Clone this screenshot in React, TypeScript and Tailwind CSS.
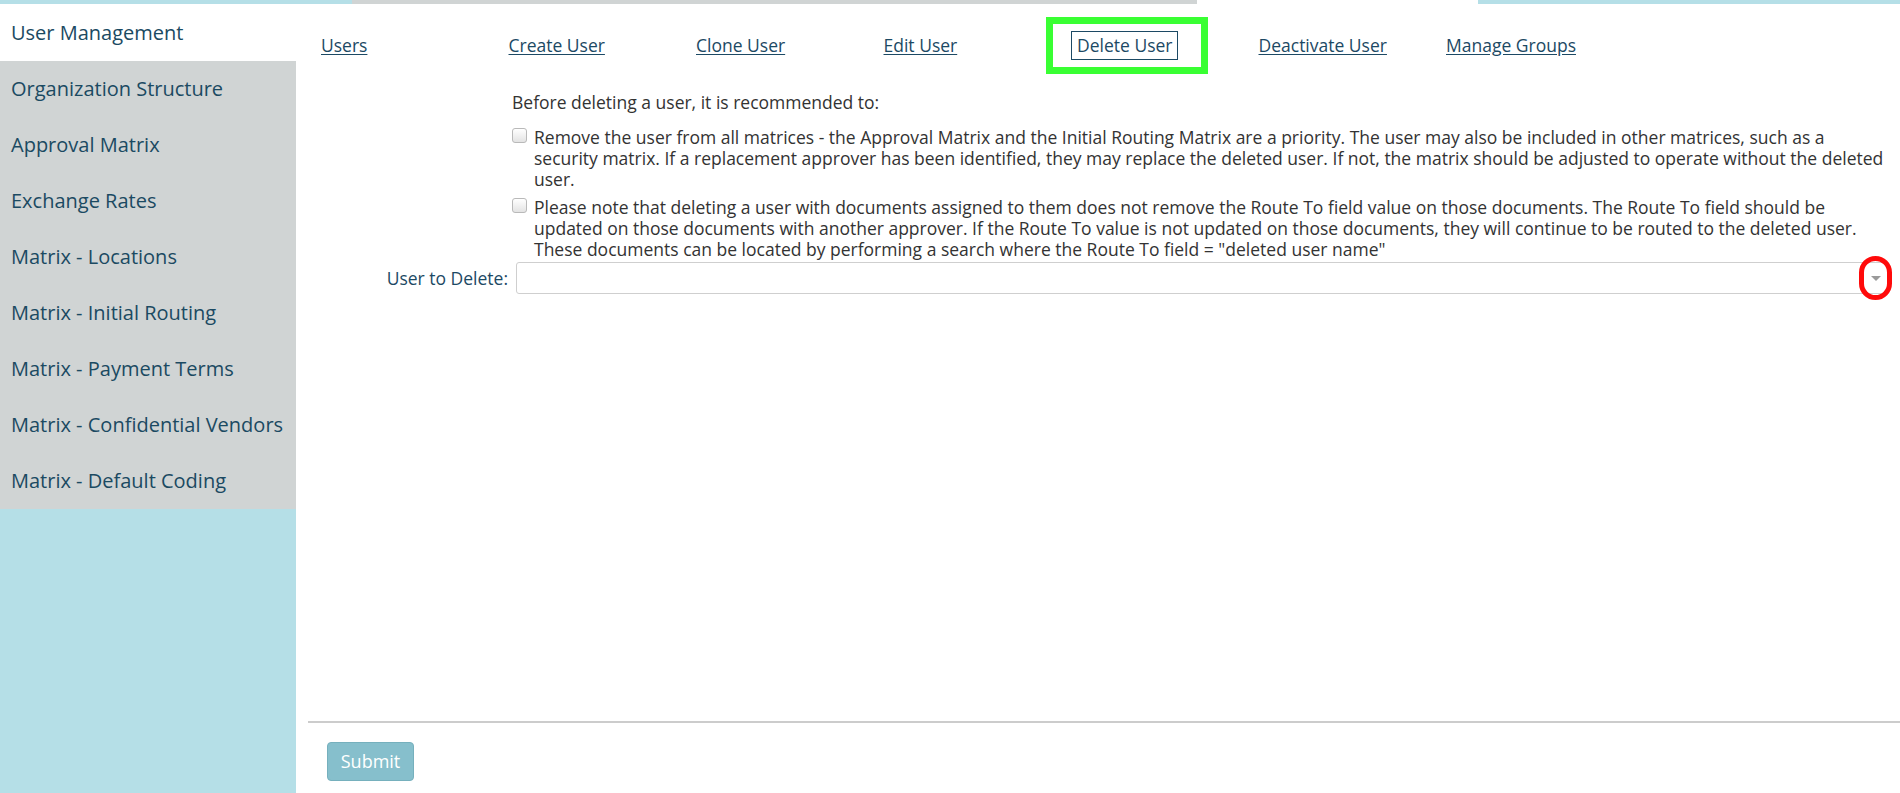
const sideItems = [
  'User Management',
  'Organization Structure',
  'Approval Matrix',
  'Exchange Rates',
  'Matrix - Locations',
  'Matrix - Initial Routing',
  'Matrix - Payment Terms',
  'Matrix - Confidential Vendors',
  'Matrix - Default Coding',
];

const navLinks = [
  'Users',
  'Create User',
  'Clone User',
  'Edit User',
  'Delete User',
  'Deactivate User',
  'Manage Groups',
];

const Checkbox = () => (
  <input
    type="checkbox"
    className="mt-[1px] h-[15px] w-[15px] shrink-0 appearance-none rounded-[3px] border border-[#b9b9b9] bg-linear-to-b from-white to-[#e3e3e3]"
  />
);

const App = () => {
  return (
    <div className="flex min-h-[793px] flex-col bg-white font-['Open_Sans',sans-serif]">
      {/* top tab strip */}
      <div className="flex h-[4px]">
        <div className="w-[352px] bg-[#b5dfe7]" />
        <div className="w-[845px] bg-[#d0d4d4]" />
        <div className="w-[281px] bg-white" />
        <div className="flex-1 bg-[#b5dfe7]" />
      </div>

      <div className="flex flex-1">
        {/* sidebar */}
        <div className="w-[296px] shrink-0 bg-[#b5dfe7]">
          {sideItems.map((item, i) => (
            <div
              key={item}
              className={
                i === 0
                  ? 'flex h-[57px] items-center bg-white pl-[11px] text-[20px] text-[#1b4a62]'
                  : 'flex h-[56px] items-center bg-[#d0d4d4] pl-[11px] text-[20px] text-[#1b4a62]'
              }
            >
              {item}
            </div>
          ))}
        </div>

        {/* main */}
        <div className="flex flex-1 flex-col">
          <div className="flex flex-1 flex-col pl-[12px] pr-[12px]">
            {/* nav links */}
            <div className="mt-[27px] flex h-[29px] items-center pl-[13px] text-[17.5px] text-[#1c4964]">
              {navLinks.map((link) => (
                <div key={link} className="w-[187.5px] shrink-0">
                  {link === 'Delete User' ? (
                    <span className="relative inline-block border border-[#1c4964] px-[5px] leading-[27px]">
                      {link}
                      <span className="absolute -top-[15px] -right-[31px] -bottom-[15px] -left-[26px] border-[7px] border-[#39ff33]" />
                    </span>
                  ) : (
                    <a href="#" className="leading-[27px] underline underline-offset-2">
                      {link}
                    </a>
                  )}
                </div>
              ))}
            </div>

            {/* warnings */}
            <div className="mt-[32px] ml-[204px] text-[17.5px] leading-[21px] text-[#333]">
              <p>Before deleting a user, it is recommended to:</p>
              <div className="mt-[14px] flex gap-[7px]">
                <Checkbox />
                <p>
                  Remove the user from all matrices - the Approval Matrix and the Initial Routing Matrix are a
                  priority. The user may also be included in other matrices, such as a security matrix. If a
                  replacement approver has been identified, they may replace the deleted user. If not, the matrix
                  should be adjusted to operate without the deleted user.
                </p>
              </div>
              <div className="mt-[7px] flex gap-[7px]">
                <Checkbox />
                <p>
                  Please note that deleting a user with documents assigned to them does not remove the Route To
                  field value on those documents. The Route To field should be updated on those documents with
                  another approver. If the Route To value is not updated on those documents, they will continue to
                  be routed to the deleted user. These documents can be located by performing a search where the
                  Route To field = "deleted user name"
                </p>
              </div>
            </div>

            {/* user select */}
            <div className="mt-[2px] flex items-center gap-[8px]">
              <label className="w-[200px] text-right text-[17.5px] text-[#1c4964]">User to Delete:</label>
              <div className="relative flex h-[32px] flex-1 items-center justify-end rounded-[3px] border border-[#cfcfcf] bg-white pr-[6px]">
                <span className="h-0 w-0 border-x-[5px] border-t-[5px] border-x-transparent border-t-[#9a9a9a]" />
                <span className="absolute -right-[5px] top-[-7px] h-[44px] w-[33px] rounded-full border-[5px] border-[#ff0a0a]" />
              </div>
            </div>
          </div>

          {/* footer */}
          <div className="ml-[12px] border-t-2 border-[#cccccc]" />
          <div className="h-[70px] pt-[19px] pl-[31px]">
            <button className="h-[39px] w-[87px] rounded-[4px] border border-[#76b0bd] bg-[#86bfcc] text-[18px] text-white">
              Submit
            </button>
          </div>
        </div>
      </div>
    </div>
  );
};

export default App;
